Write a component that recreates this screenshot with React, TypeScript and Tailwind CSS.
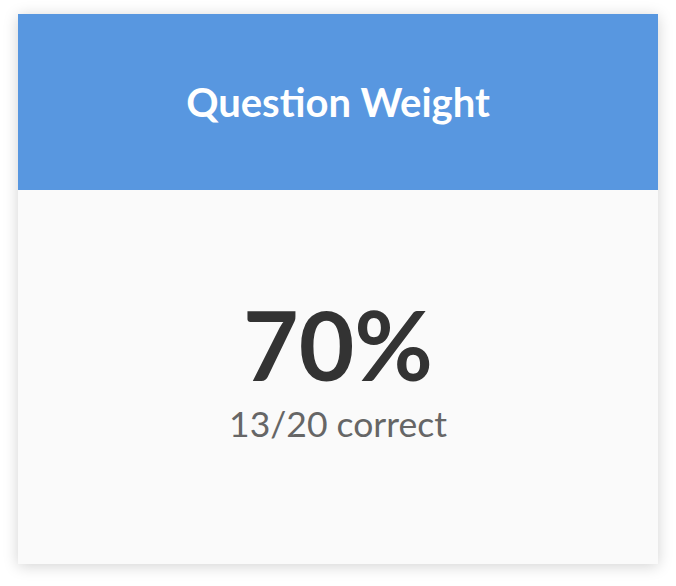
export default function App() {
  return (
    <div className="min-h-screen bg-white pt-[14px] pl-[18px]" style={{ fontFamily: "Lato, 'Open Sans', sans-serif" }}>
      <div className="w-[640px] h-[550px] flex flex-col shadow-[0_2px_14px_rgba(0,0,0,0.18)]">
        <div className="h-[176px] bg-[#5897e0] flex items-center justify-center">
          <h1 className="text-[40px] font-bold text-white leading-none">Question Weight</h1>
        </div>
        <div className="flex-1 bg-[#fafafa] flex flex-col items-center justify-center pb-[16px]">
          <div className="text-[96px] font-bold text-[#333333] leading-none">70%</div>
          <div className="text-[35.5px] text-[#666666] leading-none mt-[14px]">13/20 correct</div>
        </div>
      </div>
    </div>
  );
}
